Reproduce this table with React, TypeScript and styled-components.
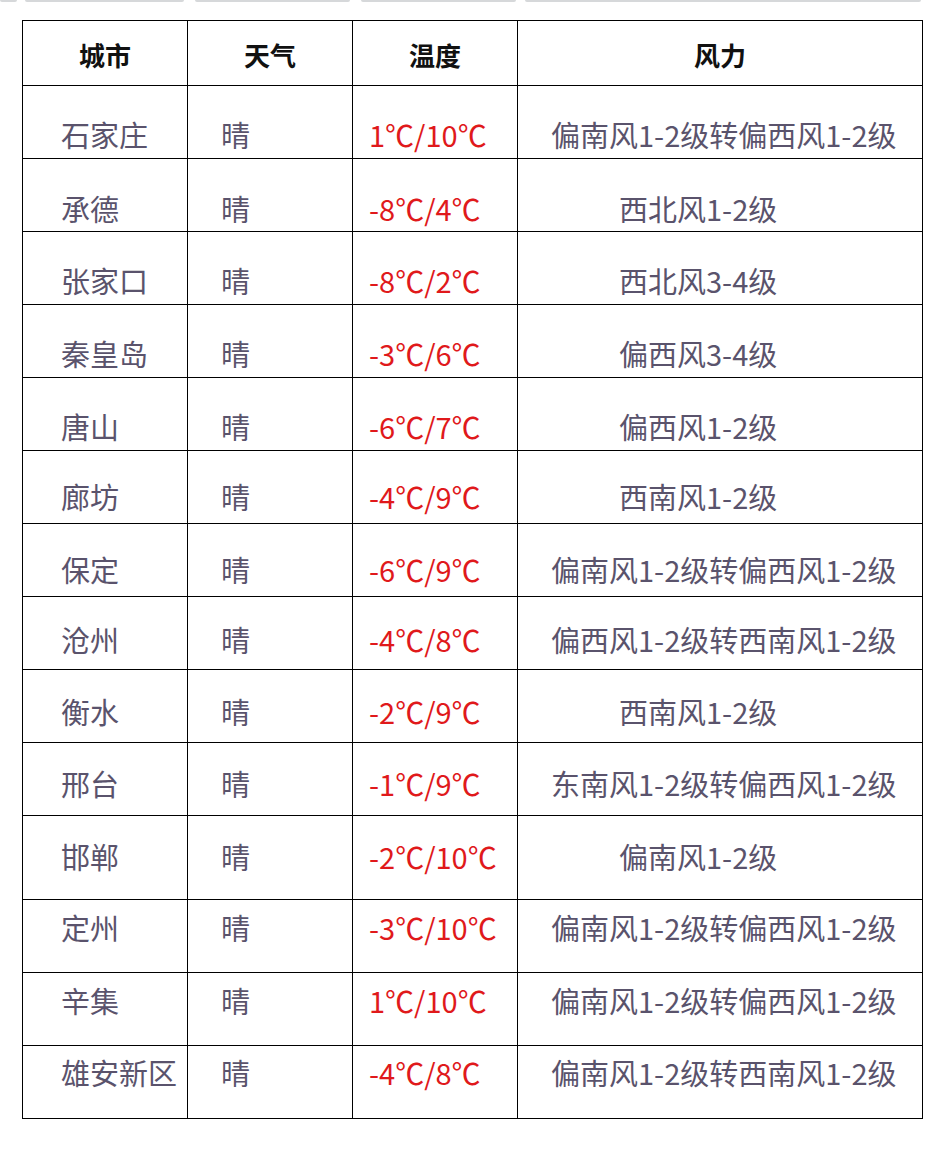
import styled, { createGlobalStyle } from 'styled-components';

const GlobalStyle = createGlobalStyle`
  html, body {
    margin: 0;
    padding: 0;
    background: #ffffff;
  }
  body {
    font-family: 'Noto Sans CJK SC', 'Noto Sans', sans-serif;
  }
`;

const Page = styled.div`
  width: 942px;
  height: 1150px;
  background: #ffffff;
  overflow: hidden;
`;

const TopEdge = styled.div`
  display: flex;
  height: 2px;
`;

const EdgePiece = styled.div<{ $w: number; $gap: number }>`
  width: ${(p) => p.$w}px;
  margin-right: ${(p) => p.$gap}px;
  height: 2px;
  background: #d6d8da;
  border-radius: 0 0 2px 2px;
`;

const Table = styled.table`
  border-collapse: collapse;
  table-layout: fixed;
  margin: 18px 0 0 22px;
  width: 901px;
`;

const HeadCell = styled.th<{ $w: number }>`
  width: ${(p) => p.$w}px;
  height: 61px;
  padding: 3px 0 0;
  border: 1px solid #000;
  text-align: center;
  vertical-align: middle;
  font-family: 'Noto Sans CJK SC', sans-serif;
  font-weight: 700;
  font-size: 26px;
  line-height: 30px;
  color: #111;
`;

const Cell = styled.td<{ $top: number; $left: number; $h: number }>`
  height: ${(p) => p.$h - p.$top}px;
  padding: ${(p) => p.$top}px 0 0 ${(p) => p.$left}px;
  border: 1px solid #000;
  vertical-align: top;
  text-align: left;
  white-space: nowrap;
  font-family: 'Noto Sans CJK SC', sans-serif;
  font-size: 29px;
  line-height: 35px;
  color: #5a536c;
`;

const TempCell = styled(Cell)`
  color: #e0191b;
`;

type Row = {
  city: string;
  temp: string;
  wind: string;
  long: boolean;
  mid: number;
  h?: number;
};

const rows: Row[] = [
  { city: '石家庄', temp: '1℃/10℃', wind: '偏南风1-2级转偏西风1-2级', long: true, mid: 50 },
  { city: '承德', temp: '-8℃/4℃', wind: '西北风1-2级', long: false, mid: 51 },
  { city: '张家口', temp: '-8℃/2℃', wind: '西北风3-4级', long: false, mid: 50 },
  { city: '秦皇岛', temp: '-3℃/6℃', wind: '偏西风3-4级', long: false, mid: 50 },
  { city: '唐山', temp: '-6℃/7℃', wind: '偏西风1-2级', long: false, mid: 50 },
  { city: '廊坊', temp: '-4℃/9℃', wind: '西南风1-2级', long: false, mid: 47 },
  { city: '保定', temp: '-6℃/9℃', wind: '偏南风1-2级转偏西风1-2级', long: true, mid: 47 },
  { city: '沧州', temp: '-4℃/8℃', wind: '偏西风1-2级转西南风1-2级', long: true, mid: 44 },
  { city: '衡水', temp: '-2℃/9℃', wind: '西南风1-2级', long: false, mid: 43 },
  { city: '邢台', temp: '-1℃/9℃', wind: '东南风1-2级转偏西风1-2级', long: true, mid: 42 },
  { city: '邯郸', temp: '-2℃/10℃', wind: '偏南风1-2级', long: false, mid: 42, h: 84 },
  { city: '定州', temp: '-3℃/10℃', wind: '偏南风1-2级转偏西风1-2级', long: true, mid: 29 },
  { city: '辛集', temp: '1℃/10℃', wind: '偏南风1-2级转偏西风1-2级', long: true, mid: 29 },
  { city: '雄安新区', temp: '-4℃/8℃', wind: '偏南风1-2级转西南风1-2级', long: true, mid: 28 },
];

const edges = [
  { w: 17, gap: 8 },
  { w: 159, gap: 11 },
  { w: 155, gap: 11 },
  { w: 155, gap: 9 },
  { w: 396, gap: 0 },
];

const App = () => {
  return (
    <Page>
      <GlobalStyle />
      <TopEdge>
        {edges.map((e, i) => (
          <EdgePiece key={i} $w={e.w} $gap={e.gap} />
        ))}
      </TopEdge>
      <Table>
        <thead>
          <tr>
            <HeadCell $w={164}>城市</HeadCell>
            <HeadCell $w={164}>天气</HeadCell>
            <HeadCell $w={164}>温度</HeadCell>
            <HeadCell $w={404}>风力</HeadCell>
          </tr>
        </thead>
        <tbody>
          {rows.map((r) => {
            const h = (r.h ?? 73) - 1;
            const top = r.mid - 19;
            return (
              <tr key={r.city}>
                <Cell $top={top} $left={38} $h={h}>
                  {r.city}
                </Cell>
                <Cell $top={top} $left={33} $h={h}>
                  晴
                </Cell>
                <TempCell $top={top} $left={16} $h={h}>
                  {r.temp}
                </TempCell>
                <Cell $top={top} $left={r.long ? 33 : 101} $h={h}>
                  {r.wind}
                </Cell>
              </tr>
            );
          })}
        </tbody>
      </Table>
    </Page>
  );
};

export default App;
